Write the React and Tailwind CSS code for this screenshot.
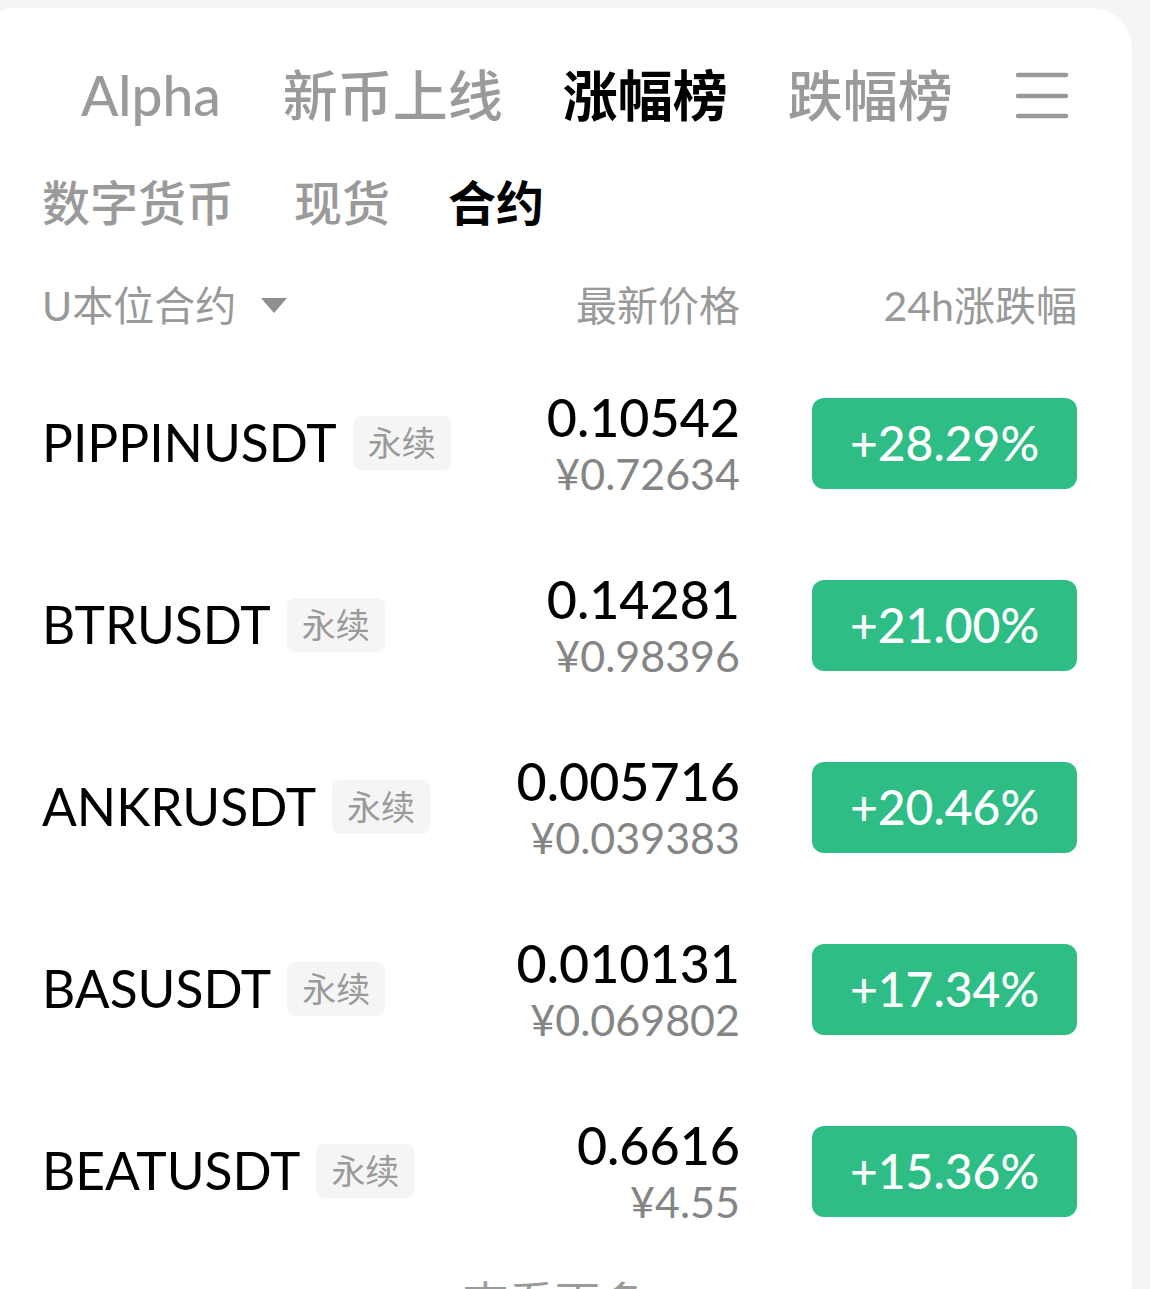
import React from "react";

const rows = [
  { name: "PIPPINUSDT", price: "0.10542", cny: "¥0.72634", pct: "+28.29%" },
  { name: "BTRUSDT", price: "0.14281", cny: "¥0.98396", pct: "+21.00%" },
  { name: "ANKRUSDT", price: "0.005716", cny: "¥0.039383", pct: "+20.46%" },
  { name: "BASUSDT", price: "0.010131", cny: "¥0.069802", pct: "+17.34%" },
  { name: "BEATUSDT", price: "0.6616", cny: "¥4.55", pct: "+15.36%" },
];

const font = {
  fontFamily: '"Lato", "Noto Sans CJK SC", sans-serif',
};

export default function App() {
  return (
    <div className="w-[1150px] h-[1289px] overflow-hidden bg-[#f5f5f5] pt-2" style={font}>
      <div className="ml-[-24px] mr-[18px] h-[1400px] rounded-[40px] bg-white pl-[66px] pr-[55px] pt-[57px]">
        {/* top tabs */}
        <div className="flex h-[60px] items-center pl-[39px] text-[55px] leading-none">
          <div className="text-[#9a9a9a] font-medium">Alpha</div>
          <div className="ml-[62px] text-[#9a9a9a] font-medium">新币上线</div>
          <div className="ml-[60px] text-black font-bold">涨幅榜</div>
          <div className="ml-[60px] text-[#9a9a9a] font-medium">跌幅榜</div>
          <div className="ml-auto mr-[8px]">
            <svg width="54" height="48" viewBox="0 0 54 48">
              <path d="M3 4H51M3 25H51M3 45H51" stroke="#999" strokeWidth="4.5" strokeLinecap="round" />
            </svg>
          </div>
        </div>
        {/* sub tabs */}
        <div className="mt-[48px] flex h-[60px] items-center text-[48px] leading-none">
          <div className="text-[#9a9a9a] font-medium">数字货币</div>
          <div className="ml-[60px] text-[#9a9a9a] font-medium">现货</div>
          <div className="ml-[58px] text-black font-bold">合约</div>
        </div>
        {/* header */}
        <div className="mt-[47px] flex h-[50px] items-center text-[41px] leading-none text-[#999]">
          <div className="flex flex-1 items-center">
            <span>U本位合约</span>
            <svg className="ml-[24px]" width="28" height="17" viewBox="0 0 28 17">
              <path d="M1 1H27L14 16Z" fill="#8f8f8f" />
            </svg>
          </div>
          <div className="text-right">最新价格</div>
          <div className="ml-[72px] w-[265px] text-right">24h涨跌幅</div>
        </div>
        {/* rows */}
        <div className="mt-[22px]">
          {rows.map((r) => (
            <div key={r.name} className="flex h-[182px] items-center">
              <div className="flex flex-1 items-center">
                <span className="text-[51.5px] leading-none text-black">{r.name}</span>
                <span className="ml-[16px] flex h-[54px] items-center rounded-[8px] bg-[#f5f5f5] px-[15px] text-[34px] leading-none text-[#9a9a9a]">
                  永续
                </span>
              </div>
              <div className="mr-[-2px] flex flex-col items-end pt-[2px]">
                <div className="text-[52px] leading-[56px] font-medium text-black">{r.price}</div>
                <div className="mt-[4px] text-[43px] leading-[50px] text-[#858585]">{r.cny}</div>
              </div>
              <div className="ml-[74px] flex h-[91px] w-[265px] items-center justify-center rounded-[12px] bg-[#2ebd85] text-[48px] leading-none font-medium text-white">
                {r.pct}
              </div>
            </div>
          ))}
        </div>
        <div className="pt-[18px] text-center text-[46px] leading-none text-[#9a9a9a] pr-[10px]">查看更多</div>
      </div>
    </div>
  );
}
